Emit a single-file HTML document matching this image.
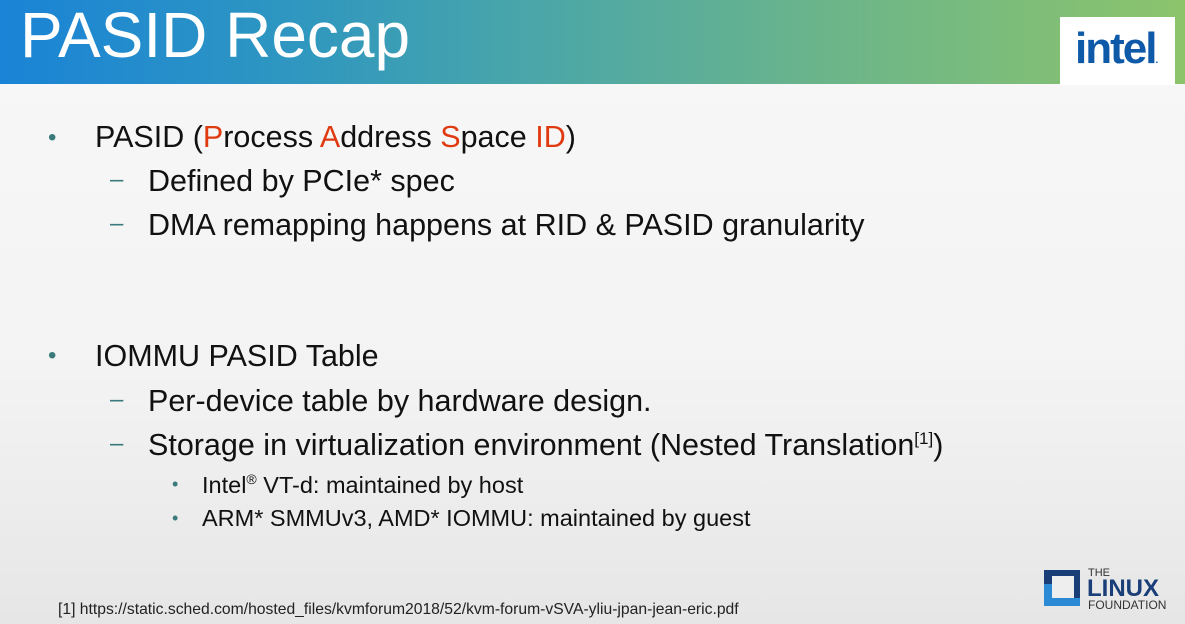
<!DOCTYPE html>
<html><head><style>
body{margin:0;width:1185px;height:624px;overflow:hidden;font-family:"Liberation Sans",Arial,sans-serif;background:linear-gradient(#f8f8f8,#f3f3f3 60%,#e6e6e6);position:relative}
.hdr{position:absolute;left:0;top:0;width:1185px;height:84px;background:linear-gradient(90deg,#1a83d6 0%,#2f97c0 25%,#4aa6a8 45%,#6cb58a 70%,#8cc46c 100%)}
.title{position:absolute;left:20px;top:-2px;font-size:64px;color:#fff;letter-spacing:0}
.intel{position:absolute;left:1060px;top:17px;width:115px;height:68px;background:#fff}
.intel span{position:absolute;left:15px;top:7px;font-size:44px;font-weight:bold;color:#0f5aa8;letter-spacing:-2px}
.t{position:absolute;color:#111;white-space:nowrap}
.l1{font-size:30.5px}.l2{font-size:30.5px}.l3{font-size:23.5px}
.r{color:#e03a10}
.dot{position:absolute;color:#3a7a7a}
</style></head><body>
<div class="hdr"><div class="title">PASID Recap</div></div>
<div class="intel"><span>intel<small style="font-size:10px">.</small></span></div>
<div class="dot" style="left:48px;top:124px;font-size:24px">•</div>
<div class="t l1" style="left:95px;top:120px">PASID (<span class="r">P</span>rocess <span class="r">A</span>ddress <span class="r">S</span>pace <span class="r">ID</span>)</div>
<div class="dot" style="left:110px;top:166px;font-size:24px">–</div>
<div class="t l2" style="left:148px;top:164px">Defined by PCIe* spec</div>
<div class="dot" style="left:110px;top:210px;font-size:24px">–</div>
<div class="t l2" style="left:148px;top:208px">DMA remapping happens at RID &amp; PASID granularity</div>
<div class="dot" style="left:48px;top:342px;font-size:24px">•</div>
<div class="t l1" style="left:95px;top:339px">IOMMU PASID Table</div>
<div class="dot" style="left:110px;top:386px;font-size:24px">–</div>
<div class="t l2" style="left:148px;top:384px">Per-device table by hardware design.</div>
<div class="dot" style="left:110px;top:430px;font-size:24px">–</div>
<div class="t l2" style="left:148px;top:428px">Storage in virtualization environment (Nested Translation<sup style="font-size:17px">[1]</sup>)</div>
<div class="dot" style="left:172px;top:474px;font-size:18px">•</div>
<div class="t l3" style="left:202px;top:471px">Intel<sup style="font-size:14px">®</sup> VT-d: maintained by host</div>
<div class="dot" style="left:172px;top:508px;font-size:18px">•</div>
<div class="t l3" style="left:202px;top:505px">ARM* SMMUv3, AMD* IOMMU: maintained by guest</div>
<div class="t" style="left:58px;top:601px;font-size:15.7px;color:#222">[1] https://static.sched.com/hosted_files/kvmforum2018/52/kvm-forum-vSVA-yliu-jpan-jean-eric.pdf</div>
<svg style="position:absolute;left:1042px;top:568px" width="40" height="42"><rect x="2" y="2" width="36" height="36" fill="#1a3e78"/><rect x="10" y="8" width="22" height="22" fill="#eee"/><rect x="2" y="16" width="8" height="22" fill="#2a8ad6"/><rect x="2" y="30" width="36" height="8" fill="#2a8ad6"/></svg>
<div class="t" style="left:1088px;top:567px;font-size:11px;color:#333">THE</div>
<div class="t" style="left:1087px;top:575px;font-size:24px;font-weight:bold;color:#1a3e78">LINUX</div>
<div class="t" style="left:1088px;top:598px;font-size:12px;color:#333">FOUNDATION</div>
</body></html>
